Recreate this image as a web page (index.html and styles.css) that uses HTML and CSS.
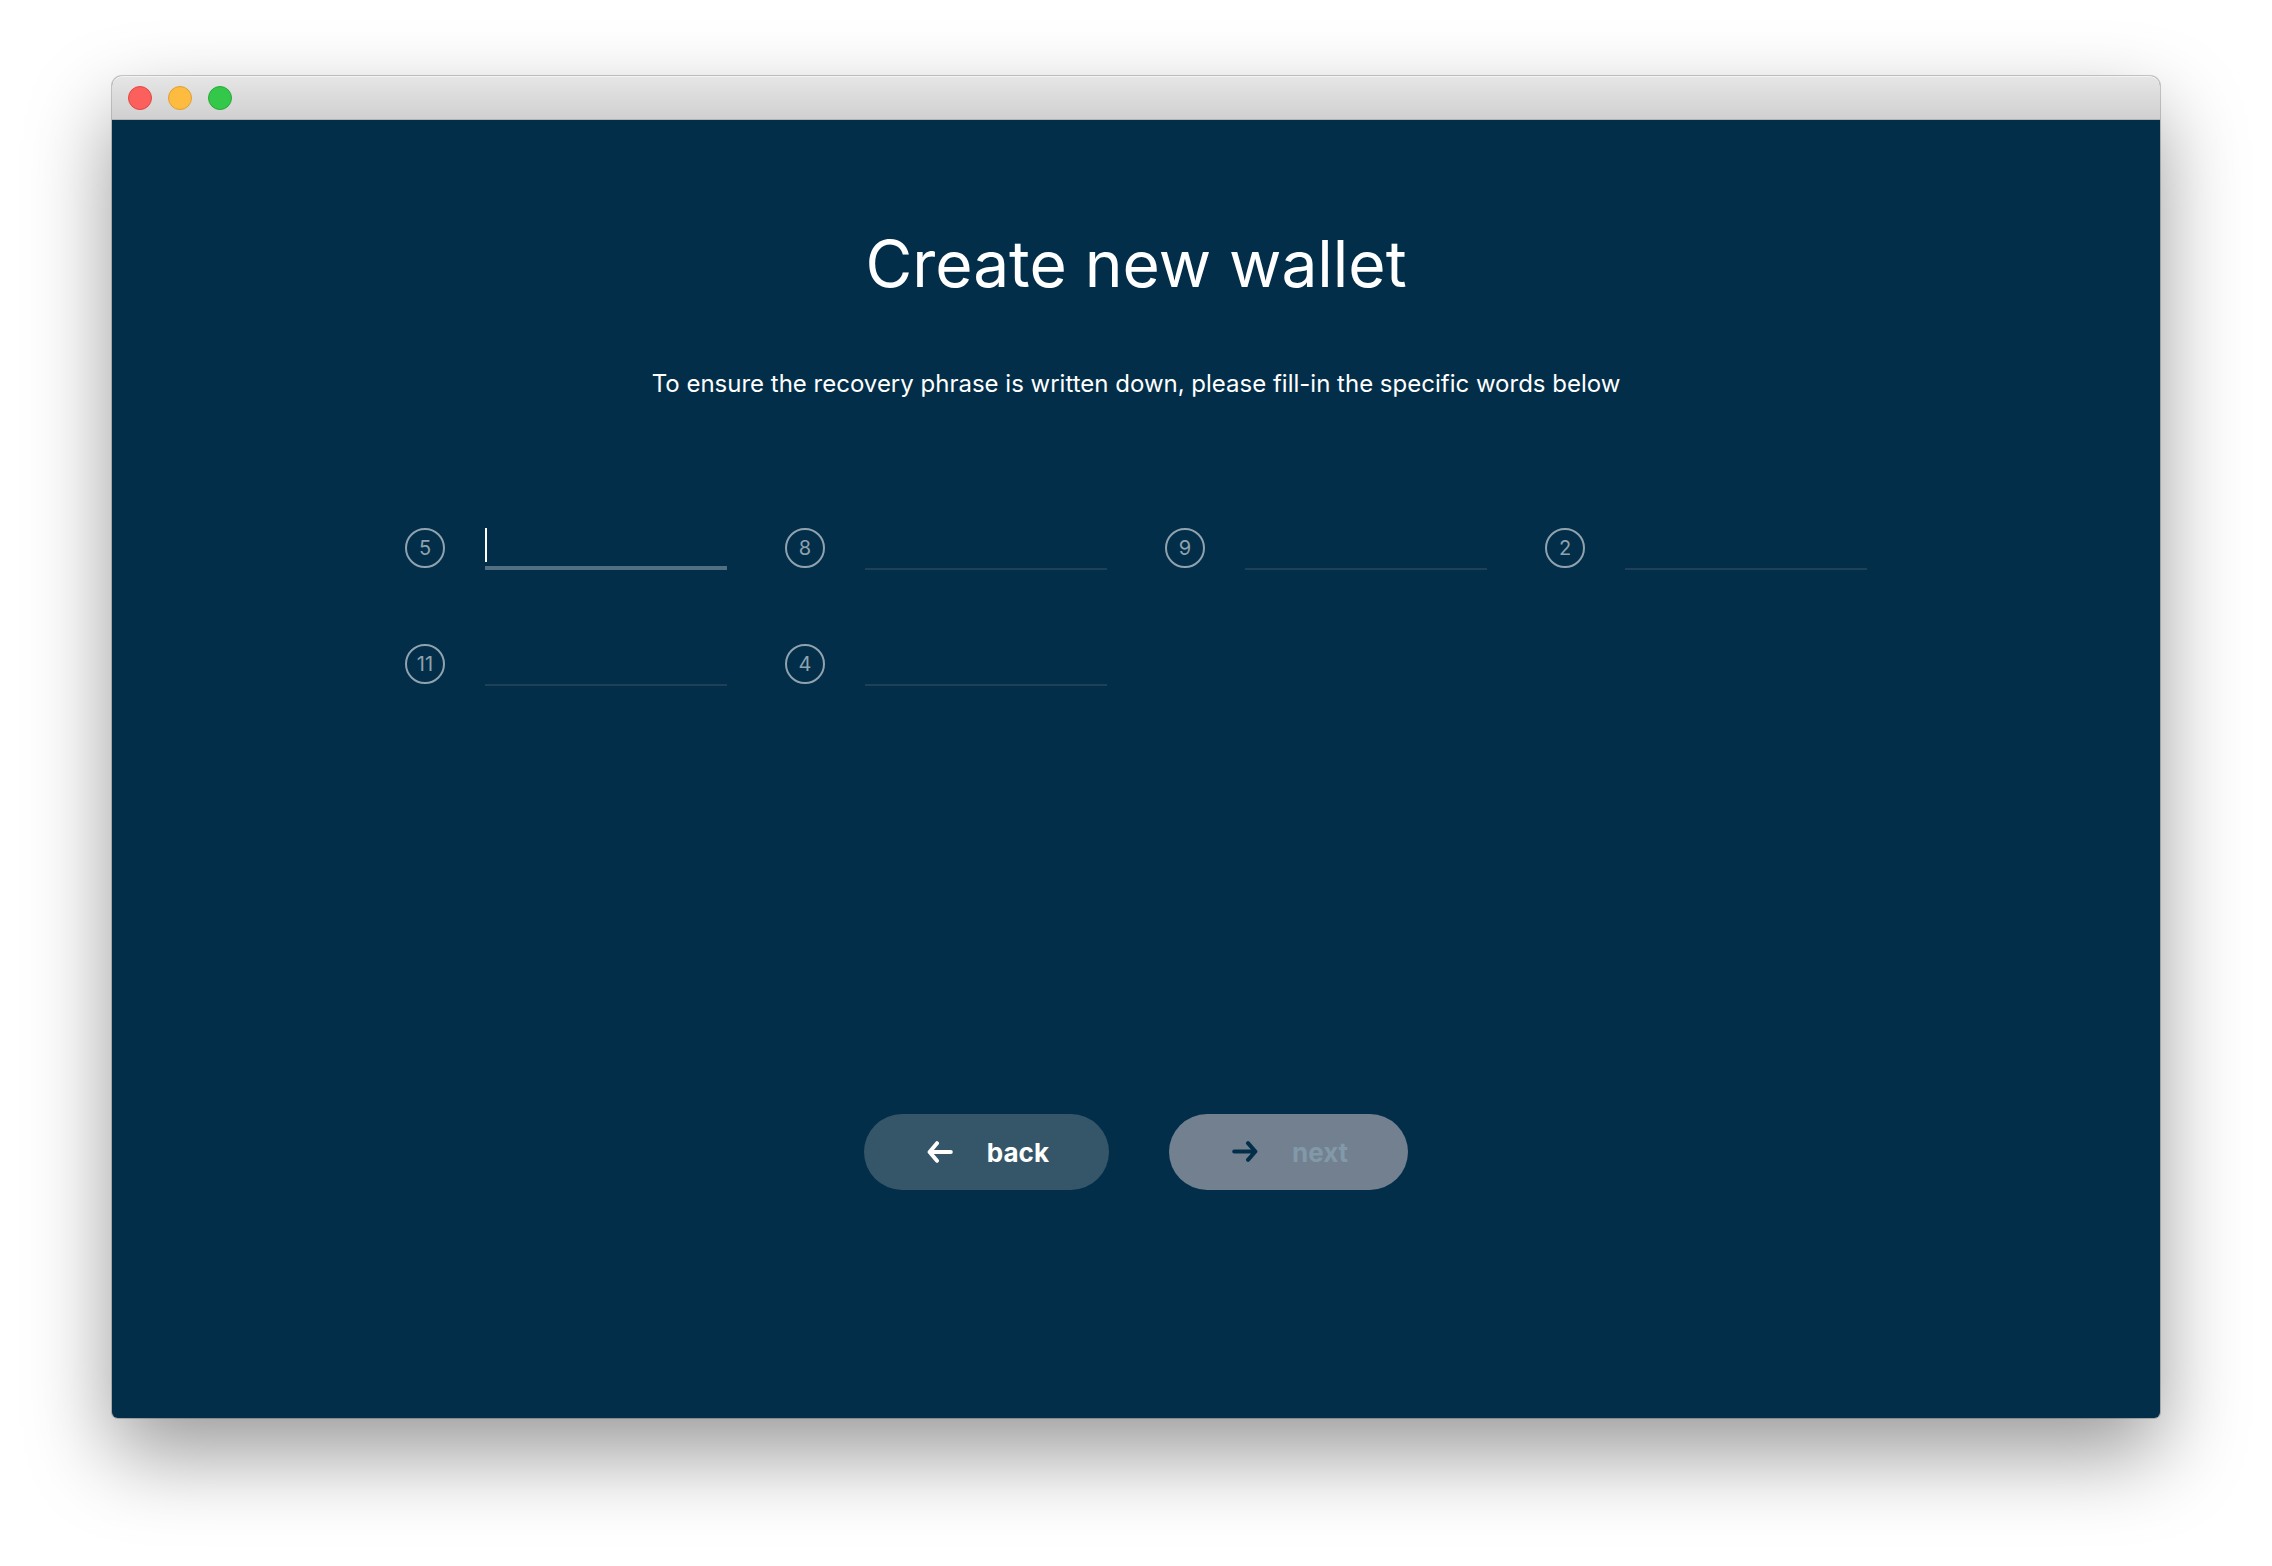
FILE: index.html
```html
<!DOCTYPE html>
<html lang="en">
<head>
<meta charset="utf-8">
<title>Create new wallet</title>
<link rel="stylesheet" href="styles.css">
</head>
<body>
<div class="window">
  <header class="titlebar">
    <button class="light light-close" type="button" aria-label="Close"></button>
    <button class="light light-minimize" type="button" aria-label="Minimize"></button>
    <button class="light light-zoom" type="button" aria-label="Zoom"></button>
  </header>
  <main class="content">
    <h1 class="title">Create new wallet</h1>
    <p class="subtitle">To ensure the recovery phrase is written down, please fill-in the specific words below</p>
    <form class="form">
      <div class="words">
        <div class="word">
          <label class="badge" for="word-5">5</label>
          <div class="field"><input class="input input-active" id="word-5" type="text"><span class="caret"></span></div>
        </div>
        <div class="word">
          <label class="badge" for="word-8">8</label>
          <div class="field"><input class="input" id="word-8" type="text"></div>
        </div>
        <div class="word">
          <label class="badge" for="word-9">9</label>
          <div class="field"><input class="input" id="word-9" type="text"></div>
        </div>
        <div class="word">
          <label class="badge" for="word-2">2</label>
          <div class="field"><input class="input" id="word-2" type="text"></div>
        </div>
        <div class="word">
          <label class="badge" for="word-11">11</label>
          <div class="field"><input class="input" id="word-11" type="text"></div>
        </div>
        <div class="word">
          <label class="badge" for="word-4">4</label>
          <div class="field"><input class="input" id="word-4" type="text"></div>
        </div>
      </div>
      <div class="actions">
        <button class="button button-back" type="button">
          <svg class="arrow" viewBox="0 0 26 22" aria-hidden="true"><path d="M10 2.2 2.6 11l7.4 8.8M3 11h20.800"/></svg>
          back
        </button>
        <button class="button button-next" type="submit" disabled>
          <svg class="arrow" viewBox="0 0 26 22" aria-hidden="true"><path d="M16 2.200 23.400 10.500 16 18.800M2.200 10.500H23"/></svg>
          <span class="next-label">next</span>
        </button>
      </div>
    </form>
  </main>
</div>
</body>
</html>
```
FILE: styles.css
```css
* {
  box-sizing: border-box;
}

body {
  margin: 0;
  min-height: 100vh;
  padding: 76px 112px 148px;
  display: flex;
  flex-direction: column;
  background: #fff;
  color: #fff;
  font-family: Inter, "Liberation Sans", sans-serif;
}

.window {
  flex: 1;
  display: flex;
  flex-direction: column;
  border-radius: 10px 10px 6px 6px;
  background: #022e49;
  box-shadow: 0 0 0 1px rgba(0, 0, 0, 0.2), 0 36px 84px rgba(0, 0, 0, 0.4);
}

.titlebar {
  display: flex;
  align-items: center;
  gap: 16px;
  height: 44px;
  padding: 0 16px;
  border-radius: 10px 10px 0 0;
  border-bottom: 1px solid #b4b2b4;
  background: linear-gradient(#e6e6e6, #d0d0d0);
  box-shadow: inset 0 1px 0 #f3f3f3;
}

.light {
  width: 24px;
  height: 24px;
  padding: 0;
  border: 1px solid;
  border-radius: 50%;
}

.light-close {
  background: #fc605c;
  border-color: #df4744;
}

.light-minimize {
  background: #fdbc40;
  border-color: #de9f34;
}

.light-zoom {
  background: #34c84a;
  border-color: #27aa35;
}

.content {
  flex: 1;
  display: flex;
  flex-direction: column;
  align-items: center;
  padding: 102px 60px 228px;
}

.title {
  margin: 0;
  font-size: 64px;
  font-weight: 400;
  line-height: 84px;
}

.subtitle {
  margin: 60px 0 0;
  font-size: 24px;
  font-weight: 400;
  line-height: 36px;
}

.form {
  flex: 1;
  width: 100%;
  display: flex;
  flex-direction: column;
  align-items: center;
  justify-content: space-between;
  gap: 60px;
  padding-top: 126px;
}

.words {
  width: 100%;
  max-width: 1462px;
  display: grid;
  grid-template-columns: repeat(4, 1fr);
  gap: 74px 58px;
}

.word {
  display: flex;
  gap: 40px;
}

.badge {
  flex: none;
  width: 40px;
  height: 40px;
  border: 2px solid #8fa2ae;
  border-radius: 50%;
  color: #8fa2ae;
  font-size: 20px;
  font-weight: 400;
  line-height: 36px;
  text-align: center;
}

.field {
  position: relative;
  flex: 1;
}

.input {
  display: block;
  width: 100%;
  height: 42px;
  padding: 0;
  border: 0;
  border-bottom: 2px solid #1e4159;
  border-radius: 0;
  outline: 0;
  background: transparent;
  color: #fff;
  font: inherit;
  font-size: 26px;
}

.input-active {
  border-bottom: 4px solid #536f82;
}

.caret {
  position: absolute;
  top: 0;
  left: 0;
  width: 2px;
  height: 34px;
  background: #fff;
}

.actions {
  display: flex;
  gap: 60px;
}

.button {
  display: flex;
  align-items: center;
  gap: 34px;
  height: 76px;
  padding: 0 60px 0 63px;
  border: 0;
  border-radius: 38px;
  color: #fff;
  font: inherit;
  font-size: 26px;
  font-weight: 700;
}

.button-back {
  background: #355669;
}

.button-next {
  background: #728090;
  color: #022e49;
}

.next-label {
  color: #8199a8;
}

.arrow {
  width: 26px;
  height: 22px;
  fill: none;
  stroke: currentColor;
  stroke-width: 4;
  stroke-linecap: round;
  stroke-linejoin: round;
}
```
